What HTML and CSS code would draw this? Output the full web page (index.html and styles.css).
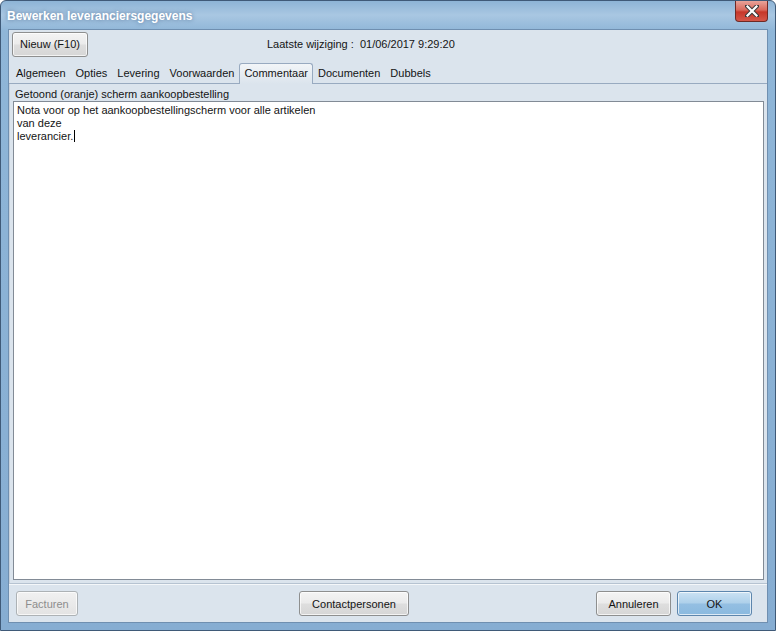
FILE: index.html
```html
<!DOCTYPE html>
<html>
<head>
<meta charset="utf-8">
<link rel="stylesheet" href="styles.css">
</head>
<body>
<div class="window">
  <div class="titlebar">
    <span class="title">Bewerken leveranciersgegevens</span>
    <button class="close" aria-label="Sluiten">
      <svg width="14" height="12" viewBox="0 0 14 12"><path d="M2 1 L12 11 M12 1 L2 11" stroke="#3a3a3a" stroke-width="4.2" stroke-linecap="square"/><path d="M2.5 1.5 L11.5 10.5 M11.5 1.5 L2.5 10.5" stroke="#fff" stroke-width="2.2" stroke-linecap="square"/></svg>
    </button>
  </div>
  <div class="client">
    <div class="toprow">
      <button class="btn new">Nieuw (F10)</button>
      <div class="lastmod">Laatste wijziging :&nbsp; 01/06/2017 9:29:20</div>
    </div>
    <div class="tabs">
      <span class="tab">Algemeen</span>
      <span class="tab">Opties</span>
      <span class="tab">Levering</span>
      <span class="tab">Voorwaarden</span>
      <span class="tab active">Commentaar</span>
      <span class="tab">Documenten</span>
      <span class="tab">Dubbels</span>
    </div>
    <div class="panel">
      <div class="label">Getoond (oranje) scherm aankoopbestelling</div>
      <div class="memo">Nota voor op het aankoopbestellingscherm voor alle artikelen<br>van deze<br>leverancier.<span class="caret"></span></div>
    </div>
    <div class="bottombar">
      <button class="btn disabled facturen">Facturen</button>
      <button class="btn contact">Contactpersonen</button>
      <div class="right">
        <button class="btn annuleren">Annuleren</button>
        <button class="btn primary ok">OK</button>
      </div>
    </div>
  </div>
</div>
</body>
</html>
```

FILE: styles.css
```css
* { box-sizing: border-box; }
html, body { margin: 0; padding: 0; }
body {
  width: 776px; height: 631px; overflow: hidden;
  font-family: "Liberation Sans", Arial, sans-serif;
  font-size: 11px;
  color: #141414;
}
.window {
  width: 776px; height: 631px;
  border: 1px solid #3f5a78;
  border-radius: 6px 6px 0 0;
  background: linear-gradient(to bottom, #8db4d6 0px, #a9c7e2 14px, #8fb6d8 30px, #86add2 100%);
  display: flex; flex-direction: column;
  padding: 0 7px 7px 7px;
}
.titlebar {
  height: 28px; flex: none;
  display: flex; align-items: flex-start; justify-content: space-between;
}
.title {
  color: #fff; font-weight: bold; font-size: 12px;
  margin-top: 8px; margin-left: -1px;
  text-shadow: 0 0 4px rgba(40,70,110,0.6);
}
.close {
  width: 33px; height: 21px; margin-top: 0; margin-right: 0;
  border: 1px solid #6e2a26; border-top: none;
  border-radius: 0 0 4px 4px;
  background: linear-gradient(to bottom, #e8a49a 0%, #d9685b 45%, #c6372a 55%, #d4574a 100%);
  display: flex; align-items: center; justify-content: center; padding: 0;
}
.client {
  flex: 1;
  background: #dbe4ed;
  border: 1px solid #6f8fb0;
  display: flex; flex-direction: column;
  padding: 0 0 6px 0;
}
.toprow {
  display: flex; align-items: center;
  height: 28px; margin-top: 0; padding-left: 3px;
}
.btn {
  font-family: "Liberation Sans", Arial, sans-serif;
  font-size: 11px; color: #141414;
  border: 1px solid #8e8f8f; border-radius: 3px;
  background: linear-gradient(to bottom, #f4f4f4 0%, #ebebeb 48%, #dedede 52%, #d6d6d6 100%);
  box-shadow: inset 0 0 0 1px rgba(255,255,255,0.7);
  padding: 0; height: 25px; flex: none;
}
.new { width: 76px; }
.lastmod { margin-left: 179px; }
.tabs {
  display: flex; align-items: flex-end;
  height: 22px; margin-top: 4px; padding-left: 2px;
  border-bottom: 1px solid #98aac0;
  flex: none;
}
.tab {
  padding: 0 5px; height: 20px; line-height: 20px;
}
.tab.active {
  height: 21px; line-height: 19px;
  border: 1px solid #98aac0; border-bottom: none;
  border-radius: 3px 3px 0 0;
  background: linear-gradient(to bottom, #f2f5f8, #dbe4ed);
  margin-bottom: -1px; padding: 0 4px;
}
.panel {
  flex: 1;
  display: flex; flex-direction: column;
  border-left: 1px solid #c7d1dc;
  border-bottom: 1px solid #b6c3d1;
  box-shadow: 0 1px 0 #f4f7fa;
  padding: 4px 3px 3px 3px;
}
.label { line-height: 13px; padding-left: 2px; }
.memo {
  flex: 1; background: #fff;
  border: 1px solid #828b96;
  padding: 2px 3px; line-height: 13px;
}
.caret {
  display: inline-block; width: 1px; height: 12px;
  background: #000; vertical-align: -2px; margin-left: 1px;
}
.bottombar {
  display: flex; align-items: center; flex: none;
  height: 25px; margin-top: 7px; padding: 0 15px 0 7px;
}
.facturen { width: 62px; }
.disabled { color: #8d8d8d; border-color: #adb2b5; background: linear-gradient(#f1f1f1, #e3e3e3); }
.contact { width: 110px; margin-left: 221px; }
.right { margin-left: auto; display: flex; gap: 6px; }
.annuleren { width: 75px; }
.ok {
  width: 75px;
  border-color: #5d86ad;
  background: linear-gradient(to bottom, #cbe2f3 0%, #aed0ea 48%, #94bfe2 52%, #8ab9df 100%);
}
```
